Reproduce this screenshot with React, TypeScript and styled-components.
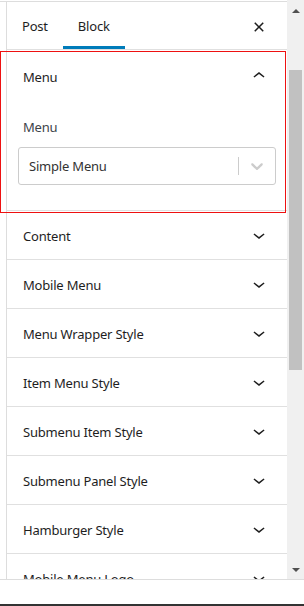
import styled, { createGlobalStyle } from 'styled-components';

const GlobalStyle = createGlobalStyle`
  html, body {
    margin: 0;
    padding: 0;
    background: #fff;
  }
  body {
    font-family: 'Noto Sans', 'Open Sans', sans-serif;
    letter-spacing: -0.2px;
    -webkit-font-smoothing: antialiased;
  }
`;

const PANELS = [
  'Content',
  'Mobile Menu',
  'Menu Wrapper Style',
  'Item Menu Style',
  'Submenu Item Style',
  'Submenu Panel Style',
  'Hamburger Style',
  'Mobile Menu Logo',
];

function ChevronDown() {
  return (
    <svg width="24" height="24" viewBox="0 0 24 24" fill="currentColor">
      <path d="M17.5 11.6L12 16l-5.5-4.4.9-1.2L12 14l4.6-3.6 1 1.2z" />
    </svg>
  );
}

function ChevronUp() {
  return (
    <svg width="24" height="24" viewBox="0 0 24 24" fill="currentColor">
      <path d="M6.5 12.4L12 8l5.5 4.4-.9 1.2L12 10l-4.6 3.6-1-1.2z" />
    </svg>
  );
}

function CloseIcon() {
  return (
    <svg width="24" height="24" viewBox="0 0 24 24" fill="currentColor">
      <path d="M12 13.06l3.712 3.713 1.061-1.06L13.061 12l3.712-3.712-1.06-1.06L12 10.938 8.288 7.227l-1.061 1.06L10.939 12l-3.712 3.712 1.06 1.061L12 13.061z" />
    </svg>
  );
}

export default function App() {
  return (
    <>
      <GlobalStyle />
      <Page>
        <Frame>
          <Sidebar>
            <Inner>
              <Header>
                <Tab>Post</Tab>
                <Tab $active>Block</Tab>
                <CloseButton aria-label="Close">
                  <CloseIcon />
                </CloseButton>
              </Header>

              <SelectedPanel>
                <PanelToggle>
                  <span>Menu</span>
                  <ChevronUp />
                </PanelToggle>
                <PanelBody>
                  <FieldLabel>Menu</FieldLabel>
                  <SelectBox>
                    <SelectValue>Simple Menu</SelectValue>
                    <SelectSeparator />
                    <SelectIndicator>
                      <svg width="20" height="20" viewBox="0 0 20 20" fill="currentColor">
                        <path d="M4.516 7.548c0.436-0.446 1.043-0.481 1.576 0l3.908 3.747 3.908-3.747c0.533-0.481 1.141-0.446 1.574 0 0.436 0.445 0.408 1.197 0 1.615-0.406 0.418-4.695 4.502-4.695 4.502-0.217 0.223-0.502 0.335-0.787 0.335s-0.57-0.112-0.789-0.335c0 0-4.287-4.084-4.695-4.502s-0.436-1.17 0-1.615z" />
                      </svg>
                    </SelectIndicator>
                  </SelectBox>
                </PanelBody>
              </SelectedPanel>

              {PANELS.map((title) => (
                <PanelRow key={title}>
                  <span>{title}</span>
                  <ChevronDown />
                </PanelRow>
              ))}
            </Inner>
          </Sidebar>

          <Scrollbar>
            <ScrollArrow $up />
            <ScrollThumb />
            <ScrollSpacer />
            <ScrollArrow />
          </Scrollbar>
        </Frame>
        <BottomBar />
      </Page>
    </>
  );
}

const Page = styled.div`
  display: flex;
  flex-direction: column;
  width: 304px;
  height: 606px;
  overflow: hidden;
`;

const Frame = styled.div`
  display: flex;
  height: 579px;
  overflow: hidden;
`;

const Sidebar = styled.div`
  flex: 1;
  margin-top: 1px;
  border-top: 1px solid #dddddd;
  overflow: hidden;
  display: flex;
`;

const Inner = styled.div`
  flex: 1;
  margin-left: 6px;
  border-left: 1px solid #dddddd;
  display: flex;
  flex-direction: column;
`;

const Header = styled.div`
  display: flex;
  align-items: stretch;
  height: 47px;
  flex-shrink: 0;
  border-bottom: 1px solid #e0e0e0;
`;

const Tab = styled.div<{ $active?: boolean }>`
  display: flex;
  align-items: center;
  padding: 1px 15px 0;
  font-size: 13px;
  color: #1e1e1e;
  box-shadow: ${(p) => (p.$active ? 'inset 0 -3px 0 #007cba' : 'none')};
`;

const CloseButton = styled.button`
  margin-left: auto;
  margin-right: 16px;
  align-self: center;
  display: flex;
  padding: 0;
  margin-top: 2px;
  border: 0;
  background: none;
  color: #1e1e1e;
`;

const SelectedPanel = styled.div`
  position: relative;
  flex-shrink: 0;
  border-bottom: 1px solid #e0e0e0;

  &::after {
    content: '';
    position: absolute;
    top: 1px;
    left: -7px;
    right: 1px;
    bottom: -3px;
    border: 1px solid #ee1111;
    pointer-events: none;
  }
`;

const PanelToggle = styled.div`
  display: flex;
  align-items: center;
  justify-content: space-between;
  height: 52px;
  padding: 0 16px;
  font-size: 13px;
  color: #1e1e1e;

  span {
    padding-top: 2px;
  }
`;

const PanelBody = styled.div`
  padding: 16px 11px 25px;
`;

const FieldLabel = styled.div`
  padding-left: 5px;
  height: 18px;
  line-height: 18px;
  font-size: 13px;
  color: #3c434a;
  margin-bottom: 11px;
`;

const SelectBox = styled.div`
  display: flex;
  align-items: center;
  height: 38px;
  box-sizing: border-box;
  border: 1px solid #cccccc;
  border-radius: 3px;
  background: #fff;
`;

const SelectValue = styled.div`
  flex: 1;
  padding-left: 10px;
  font-size: 13px;
  color: #333333;
`;

const SelectSeparator = styled.span`
  width: 1px;
  height: 18px;
  background: #cccccc;
`;

const SelectIndicator = styled.div`
  display: flex;
  padding: 8px;
  color: #cccccc;
`;

const PanelRow = styled.div`
  display: flex;
  align-items: center;
  justify-content: space-between;
  flex-shrink: 0;
  height: 48px;
  padding: 0 16px;
  border-bottom: 1px solid #e0e0e0;
  font-size: 13px;
  color: #1e1e1e;

  span {
    padding-top: 2px;
  }
`;

const Scrollbar = styled.div`
  width: 17px;
  flex-shrink: 0;
  background: #f0f0f0;
  display: flex;
  flex-direction: column;
`;

const ScrollArrow = styled.div<{ $up?: boolean }>`
  height: ${(p) => (p.$up ? '21px' : '19px')};
  display: flex;
  align-items: center;
  justify-content: center;

  &::before {
    content: '';
    width: 0;
    height: 0;
    border-left: 4px solid transparent;
    border-right: 4px solid transparent;
    ${(p) =>
      p.$up ? 'border-bottom: 4px solid #505050;' : 'border-top: 4px solid #505050;'}
  }
`;

const ScrollThumb = styled.div`
  margin: 49px 2px 0;
  height: 300px;
  background: #c1c1c1;
`;

const ScrollSpacer = styled.div`
  flex: 1;
`;

const BottomBar = styled.div`
  height: 24px;
  border-top: 1px solid #dddddd;
  border-bottom: 2px solid #333333;
  background: #fff;
`;
